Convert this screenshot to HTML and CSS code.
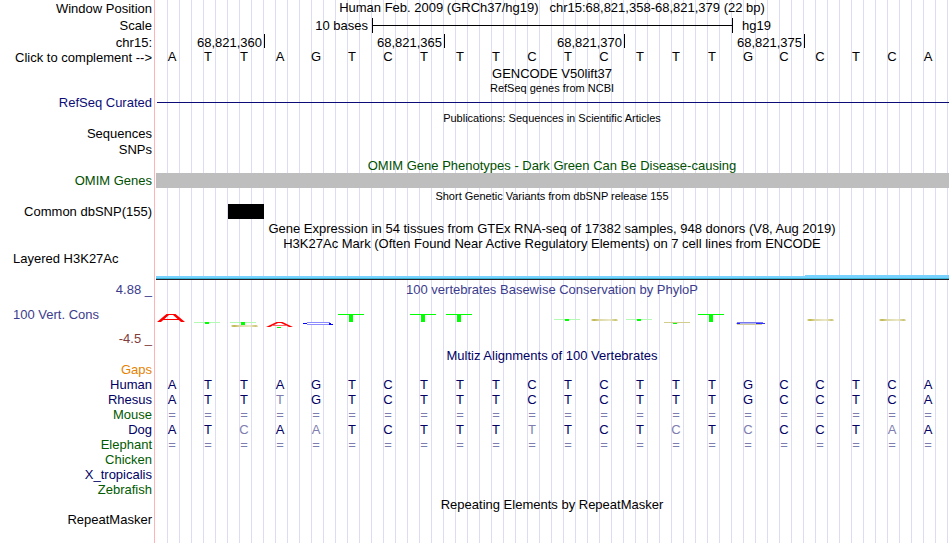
FILE: index.html
```html
<!DOCTYPE html>
<html lang="en">
<head>
<meta charset="utf-8">
<title>Human hg19 chr15:68,821,358-68,821,379</title>
<link rel="stylesheet" href="styles.css">
</head>
<body>
<main class="browser">
  <div class="row h16"><div class="label">Window Position</div><h1 class="title high">Human Feb. 2009 (GRCh37/hg19) &nbsp; chr15:68,821,358-68,821,379 (22 bp)</h1></div>
  <div class="row h18"><div class="label">Scale</div>
    <div class="track bases22 scale"><span class="scale-text">10 bases</span><span class="scale-bar"></span><span class="scale-name">hg19</span></div>
  </div>
  <div class="row h16"><div class="label">chr15:</div>
    <div class="track bases22 ruler"><span class="tick first">68,821,360</span><span class="tick">68,821,365</span><span class="tick">68,821,370</span><span class="tick">68,821,375</span></div>
  </div>
  <div class="row h15"><button type="button" class="label">Click to complement --&gt;</button><div class="track letters reference" data-bases="ATTAGTCTTTCTCTTTGCCTCA"></div></div>

  <div class="row h16"><div class="label"></div><h2 class="title">GENCODE V50lift37</h2></div>
  <div class="row h14"><div class="label"></div><h2 class="title small">RefSeq genes from NCBI</h2></div>
  <div class="row h15"><div class="label blue">RefSeq Curated</div><div class="track"><div class="intron"></div></div></div>

  <div class="row h16"><div class="label"></div><h2 class="title small low">Publications: Sequences in Scientific Articles</h2></div>
  <div class="row h15"><div class="label">Sequences</div></div>
  <div class="row h16"><div class="label">SNPs</div></div>

  <div class="row h16"><div class="label"></div><h2 class="title green low">OMIM Gene Phenotypes - Dark Green Can Be Disease-causing</h2></div>
  <div class="row h15"><div class="label green">OMIM Genes</div><div class="track"><div class="gene-bar"></div></div></div>

  <div class="row h16"><div class="label"></div><h2 class="title small low">Short Genetic Variants from dbSNP release 155</h2></div>
  <div class="row h15"><div class="label">Common dbSNP(155)</div><div class="track bases22 variants"><span class="variant"></span></div></div>

  <div class="row h17"><div class="label"></div><h2 class="title low">Gene Expression in 54 tissues from GTEx RNA-seq of 17382 samples, 948 donors (V8, Aug 2019)</h2></div>
  <div class="row h15"><div class="label"></div><h2 class="title">H3K27Ac Mark (Often Found Near Active Regulatory Elements) on 7 cell lines from ENCODE</h2></div>
  <div class="row layered"><div class="label left">Layered H3K27Ac</div>
    <div class="track signal-track"><div class="signal-rise"></div><div class="signal"></div></div>
  </div>

  <div class="row conservation">
    <div class="label cons-label"><span class="violet">4.88 _</span><span class="violet cons-name">100 Vert. Cons</span><span class="maroon">-4.5 _</span></div>
    <div class="track cons-track">
      <h2 class="title violet">100 vertebrates Basewise Conservation by PhyloP</h2>
      <svg class="logo" viewBox="154 297 796 50" preserveAspectRatio="none" aria-hidden="true">
        <defs>
          <linearGradient id="khaki"><stop offset="0" stop-color="#d8d290"/><stop offset=".12" stop-color="#c0b850"/><stop offset=".3" stop-color="#dcd8a4"/><stop offset=".7" stop-color="#eae8c8"/><stop offset=".92" stop-color="#cac473"/><stop offset="1" stop-color="#eae8c8"/></linearGradient>
          <g id="tall"><path fill="#0f0" d="M0 314h26v1H0zM11 314h4v8h-4z"/></g>
          <g id="flat"><path fill="#b4fab4" d="M0 0h26v1H0z"/><path fill="#0f0" d="M11 0h4v2h-4z"/></g>
          <path id="bar" fill="url(#khaki)" d="M1 0h25l1 1v1H1L0 1z"/>
          <g id="loop"><path fill="#fff" d="M2 0h25v3H2z"/><path fill="none" stroke="#8c8cff" d="M27 .5H4M4 2.5h24"/><path fill="#00f" d="M0 1h4v1H0zM26 1h2v1h-2zM26 2h4v1h-4z"/></g>
        </defs>
        <g fill="#f00"><path d="M157 322l9.500-8h9l9.500 8h-4l-8-7h-4l-8 7z"/><path d="M163 319h16v1h-16z"/></g>
        <use href="#flat" x="194" y="322"/>
        <use href="#flat" x="230" y="322"/><path fill="#0f0" d="M241 322h4v3h-4z"/>
        <use href="#bar" x="231" y="325"/>
        <path fill="#f00" d="M266 327l10.500-5h6l10.500 5h-4l-8-4h-3l-8 4z"/><path fill="#f66" d="M272 325h15v1h-15z"/>
        <path fill="#0f0" d="M277 327h4v1h-4z"/>
        <use href="#loop" x="303" y="322"/>
        <use href="#tall" x="338"/><use href="#tall" x="410"/><use href="#tall" x="446"/>
        <use href="#flat" x="554" y="319"/>
        <use href="#bar" x="591" y="319"/>
        <use href="#flat" x="626" y="319"/>
        <path fill="#d2cd8c" d="M664 322h26v1h-26z"/><path fill="#0f0" d="M673 323h4v1h-4z"/>
        <use href="#tall" x="698"/>
        <path fill="#7878f0" d="M737 322h26v1h-26z"/><path fill="#b4b4f0" d="M736 323h24v1h-24z"/><path fill="#00f" d="M737 323h3v1h-3zM756 323h9v1h-9z" opacity=".8"/><path fill="#d2cd9c" d="M737 324h25v1h-25z"/>
        <use href="#bar" x="807" y="319"/><use href="#bar" x="879" y="319"/>
      </svg>
    </div>
  </div>

  <div class="row h14"><div class="label"></div><h2 class="title navy high">Multiz Alignments of 100 Vertebrates</h2></div>
  <div class="row h15"><div class="label orange">Gaps</div></div>
  <div class="row h15"><div class="label navy">Human</div><div class="track letters navy" data-bases="ATTAGTCTTTCTCTTTGCCTCA"></div></div>
  <div class="row h15"><div class="label navy">Rhesus</div><div class="track letters navy" data-bases="ATTtGTCTTTCTCTTTGCCTCA"></div></div>
  <div class="row h15"><div class="label forest">Mouse</div><div class="track letters unaligned" data-bases="======================"></div></div>
  <div class="row h15"><div class="label navy">Dog</div><div class="track letters navy" data-bases="ATcAaTCTTTtTCTcTcCCTaA"></div></div>
  <div class="row h15"><div class="label forest">Elephant</div><div class="track letters unaligned" data-bases="======================"></div></div>
  <div class="row h15"><div class="label forest">Chicken</div></div>
  <div class="row h15"><div class="label navy">X_tropicalis</div></div>
  <div class="row h15"><div class="label forest">Zebrafish</div></div>

  <div class="row h15"><div class="label"></div><h2 class="title">Repeating Elements by RepeatMasker</h2></div>
  <div class="row h15"><div class="label">RepeatMasker</div></div>
</main>
<script src="bases.js"></script>
</body>
</html>
```
FILE: styles.css
```css
* { box-sizing: border-box; }

body {
  margin: 0;
  background: #fff;
  color: #000;
  font: 13px/15px "Liberation Sans", Arial, sans-serif;
}

.browser {
  position: relative;
  z-index: 0;
  min-height: 100vh;
  background: linear-gradient(#ffb4b4, #ffb4b4) 154px 0 / 1px 100% no-repeat;
}

/* three guide lines for each of the 22 bases */
.browser::before {
  content: "";
  position: absolute;
  z-index: -1;
  inset: 0 2px 0 156px;
  background: linear-gradient(to left, #dcdcf5 1px, transparent 1px) 0 0 / calc(100% / 66) 100%;
}

.row {
  display: grid;
  grid-template-columns: 154px minmax(0, 1fr);
  align-items: center;
  white-space: nowrap;
}
.h14 { height: 14px; }
.h15 { height: 15px; }
.h16 { height: 16px; }
.h17 { height: 17px; }
.h18 { height: 18px; }

.label {
  padding: 0 2px 0 0;
  border: 0;
  background: none;
  color: #000;
  font: inherit;
  text-align: right;
}
.label.left { padding-left: 13px; text-align: left; }

.title {
  margin: 0;
  font-size: 13px;
  font-weight: normal;
  text-align: center;
}
.small { font-size: 11px; }
.title.high { align-self: start; }
.title.low { align-self: end; }

.blue { color: #0c0c78; }
.navy { color: #000064; }
.violet { color: #3c3c8c; }
.maroon { color: #823c3c; }
.green { color: #005000; }
.forest { color: #005a00; }
.orange { color: #e68200; }

.track { align-self: stretch; }
.bases22, .letters {
  display: grid;
  grid-template-columns: repeat(22, minmax(0, 1fr));
}

.scale, .ruler { padding: 0 1px 0 3px; }
.scale { align-items: center; }
.scale-text { grid-column: span 6; padding-right: 5px; text-align: right; }
.scale-bar {
  grid-column: span 10;
  height: 15px;
  margin-left: -1px;
  border: solid #000;
  border-width: 0 1px;
  background: linear-gradient(#000, #000) 0 7px / 100% 1px no-repeat;
}
.scale-name { grid-column: span 4; padding-left: 9px; }

.tick {
  grid-column: span 5;
  height: 14px;
  padding-right: 2px;
  border-right: 1px solid #000;
  line-height: 17px;
  text-align: right;
}
.tick.first { grid-column: span 3; }

.letters { padding-right: 4px; text-align: center; }
.reference { line-height: 13px; }
.unaligned, .mismatch { color: #7d7daf; }

.intron { height: 1px; margin: 7px 1px 0 3px; background: #0c0c78; }
.gene-bar { height: 15px; margin: 0 1px 0 2px; background: #bebebe; }
.variants { padding: 0 2px; }
.variant { grid-column: 3; background: #000; }

.layered { height: 29px; align-items: start; }
.signal-track {
  display: flex;
  flex-direction: column;
  justify-content: flex-end;
  padding: 0 1px 0 2px;
}
.signal-rise { width: calc(100% * 4 / 22); height: 1px; margin-left: auto; background: #78d2ff; }
.signal {
  height: 4px;
  background: linear-gradient(#78d2ff 2px, #3cb4d2 2px 3px, #281e28 3px);
}

.conservation { height: 68px; }
.cons-label {
  display: flex;
  flex-direction: column;
  align-self: stretch;
  justify-content: space-between;
  padding-top: 2px;
  padding-bottom: 2px;
}
.cons-name { padding-left: 13px; text-align: left; }
.cons-track { padding-top: 2px; }
.logo { display: block; width: 100%; height: 50px; }
```
FILE: bases.js
```js
// Fills each alignment track; lower-case bases differ from the reference.
document.querySelectorAll('[data-bases]').forEach(function (track) {
  Array.from(track.dataset.bases).forEach(function (base) {
    var cell = document.createElement('span');
    cell.textContent = base.toUpperCase();
    if (/[a-z]/.test(base)) cell.className = 'mismatch';
    track.appendChild(cell);
  });
});
```
